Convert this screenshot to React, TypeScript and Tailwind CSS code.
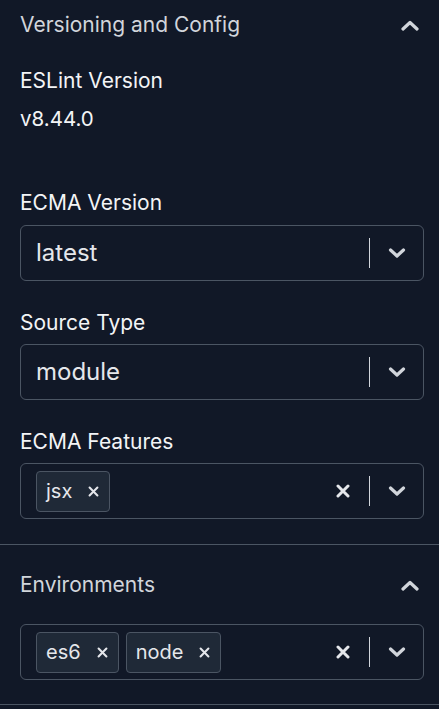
import React from "react";

function ChevronUp() {
  return (
    <svg width="18" height="11" viewBox="0 0 18 11" fill="none">
      <path d="M2 9 L9 2.5 L16 9" stroke="#d1d5db" strokeWidth="3.2" strokeLinecap="round" strokeLinejoin="round" />
    </svg>
  );
}

function ChevronDown() {
  return (
    <svg width="18" height="10" viewBox="0 0 18 10" fill="none">
      <path d="M2.5 2 L9 8 L15.5 2" stroke="#d1d5db" strokeWidth="3.2" strokeLinecap="round" strokeLinejoin="round" />
    </svg>
  );
}

function XIcon({ size, stroke }: { size: number; stroke: number }) {
  return (
    <svg width={size} height={size} viewBox="0 0 14 14" fill="none">
      <path d="M2 2 L12 12 M12 2 L2 12" stroke="#e5e7eb" strokeWidth={stroke} strokeLinecap="round" />
    </svg>
  );
}

function Indicators({ clearable }: { clearable?: boolean }) {
  return (
    <div className="flex items-center h-full">
      {clearable && (
        <div className="w-[53px] flex items-center justify-center">
          <XIcon size={14} stroke={3} />
        </div>
      )}
      <div className="w-px h-[30px] bg-[#d1d5db]" />
      <div className="w-[53px] flex items-center justify-center">
        <ChevronDown />
      </div>
    </div>
  );
}

function Select({ value }: { value: string }) {
  return (
    <div className="h-[56px] rounded-[6px] border border-[#4b5563] flex items-center justify-between pl-[15px]">
      <span className="text-[24px] text-[#e5e7eb] leading-none">{value}</span>
      <Indicators />
    </div>
  );
}

function Chip({ label }: { label: string }) {
  return (
    <div className="h-[41px] rounded-[4px] border border-[#4b5563] bg-[#1f2937] flex items-center pl-[9px] pr-[10px]">
      <span className="text-[20px] text-[#e5e7eb] leading-none">{label}</span>
      <span className="ml-[16px] flex items-center">
        <XIcon size={11} stroke={2.6} />
      </span>
    </div>
  );
}

function MultiSelect({ values }: { values: string[] }) {
  return (
    <div className="h-[56px] rounded-[6px] border border-[#4b5563] flex items-center justify-between pl-[15px]">
      <div className="flex items-center gap-[7px]">
        {values.map((v) => (
          <Chip key={v} label={v} />
        ))}
      </div>
      <Indicators clearable />
    </div>
  );
}

function Label({ children }: { children: React.ReactNode }) {
  return <div className="text-[21px] leading-[28px] text-[#f3f4f6]">{children}</div>;
}

export default function App() {
  return (
    <div className="min-h-screen bg-[#111827] font-['Inter',sans-serif]">
      <section className="pl-5 pr-[15px] pb-[25px] border-b border-[#4b5563]">
        <div className="h-[50px] flex items-center justify-between pr-[5px]">
          <span className="text-[21px] text-[#d1d5db]">Versioning and Config</span>
          <ChevronUp />
        </div>
        <div className="mt-[17px]">
          <Label>ESLint Version</Label>
          <div className="mt-[10px] text-[20.5px] leading-[28px] text-[#f3f4f6]">v8.44.0</div>
        </div>
        <div className="mt-[56px] flex flex-col gap-[28px]">
          <div>
            <Label>ECMA Version</Label>
            <div className="mt-[8px]">
              <Select value="latest" />
            </div>
          </div>
          <div>
            <Label>Source Type</Label>
            <div className="mt-[7px]">
              <Select value="module" />
            </div>
          </div>
          <div>
            <Label>ECMA Features</Label>
            <div className="mt-[7px]">
              <MultiSelect values={["jsx"]} />
            </div>
          </div>
        </div>
      </section>
      <section className="pl-5 pr-[15px] pb-[24px] border-b border-[#4b5563]">
        <div className="h-[50px] mt-[15px] flex items-center justify-between pr-[5px]">
          <span className="text-[21px] text-[#d1d5db]">Environments</span>
          <ChevronUp />
        </div>
        <div className="mt-[14px]">
          <MultiSelect values={["es6", "node"]} />
        </div>
      </section>
    </div>
  );
}
